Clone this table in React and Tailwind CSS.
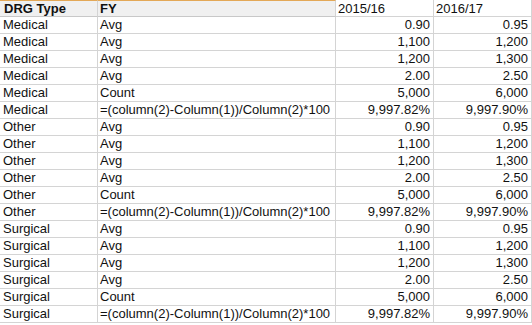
const rows = []
const groups = ['Medical', 'Other', 'Surgical']
const body = [
  ['Avg', '0.90', '0.95'],
  ['Avg', '1,100', '1,200'],
  ['Avg', '1,200', '1,300'],
  ['Avg', '2.00', '2.50'],
  ['Count', '5,000', '6,000'],
  ['=(column(2)-Column(1))/Column(2)*100', '9,997.82%', '9,997.90%'],
]
groups.forEach((g) => body.forEach((b) => rows.push([g, ...b])))

export default function App() {
  return (
    <div
      className="w-[532px] h-[325px] bg-white overflow-hidden text-[13px] leading-[16px] text-[#111]"
      style={{ fontFamily: '"Liberation Sans", Arial, sans-serif' }}
    >
      <div className="grid grid-cols-[98px_238px_98px_98px]">
        {/* header */}
        <div className="h-[17px] pl-[4px] font-bold bg-[#f0f0f0] border-t border-t-[#e3a857] border-r border-r-[#d4d4d4] border-b border-b-[#c8c8c8]">
          DRG Type
        </div>
        <div className="h-[17px] pl-[2px] font-bold bg-[#f0f0f0] border-t border-t-[#e3a857] border-r border-r-[#d4d4d4] border-b border-b-[#c8c8c8]">
          FY
        </div>
        <div className="h-[17px] pl-[2px] pt-px border-r border-[#d4d4d4] border-b">2015/16</div>
        <div className="h-[17px] pl-[2px] pt-px border-r border-[#d4d4d4] border-b">2016/17</div>

        {rows.map((r, i) => (
          <div key={i} className="contents">
            <div className="h-[17px] pl-[3px] border-r border-b border-[#d4d4d4] whitespace-nowrap">{r[0]}</div>
            <div className="h-[17px] pl-[2px] border-r border-b border-[#d4d4d4] whitespace-nowrap">{r[1]}</div>
            <div className="h-[17px] pr-[3px] text-right border-r border-b border-[#d4d4d4]">{r[2]}</div>
            <div className="h-[17px] pr-[3px] text-right border-r border-b border-[#d4d4d4]">{r[3]}</div>
          </div>
        ))}
      </div>
    </div>
  )
}
